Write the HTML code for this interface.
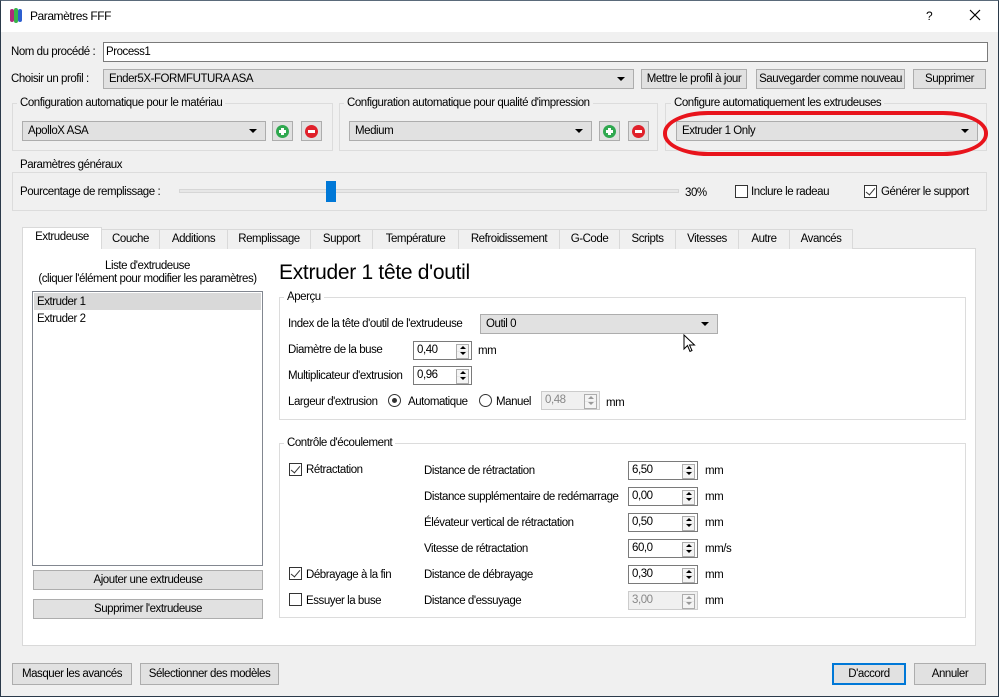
<!DOCTYPE html>
<html><head><meta charset="utf-8"><style>
*{box-sizing:border-box;margin:0;padding:0}
body{width:999px;height:697px;overflow:hidden;background:#f0f0f0;font-family:"Liberation Sans",sans-serif;font-size:11.5px;color:#000;position:relative;letter-spacing:-0.45px}
.a{position:absolute;white-space:nowrap}
.t{position:absolute;white-space:nowrap;line-height:14px}
.btn{position:absolute;background:#e1e1e1;border:1px solid #adadad;text-align:center;line-height:18px;white-space:nowrap;overflow:hidden}
.cb{position:absolute;background:#e1e1e1;border:1px solid #adadad;line-height:18px;padding-left:5px;white-space:nowrap}
.cb:after{content:"";position:absolute;right:8px;top:7px;border-left:4px solid transparent;border-right:4px solid transparent;border-top:4px solid #000}
.grp{position:absolute;border:1px solid #dcdcdc}
.gt{position:absolute;background:#f0f0f0;padding:0 3px;line-height:14px;white-space:nowrap}
.w .gt{background:#fff}
.spin{position:absolute;background:#fff;border:1px solid #7a7a7a;height:19px;width:59px;line-height:17px;padding-left:3px}
.spin:after{content:"";position:absolute;right:2px;top:2px;width:11px;height:13px;border:1px solid #adadad;background:linear-gradient(#e8e8e8,#e8e8e8) 0 6px/100% 1px no-repeat,#f4f4f4}
.spin i{position:absolute;right:5px;width:0;height:0;border-left:3px solid transparent;border-right:3px solid transparent;z-index:2}
.spin i.u{top:4px;border-bottom:3px solid #000}
.spin i.d{top:10px;border-top:3px solid #000}
.spin.dis{border-color:#ccc;color:#888;background:#f0f0f0}
.spin.dis i.u{border-bottom-color:#999}.spin.dis i.d{border-top-color:#999}
.chk{position:absolute;width:13px;height:13px;border:1px solid #333;background:#fff}
.chk.on:after{content:"";position:absolute;left:3px;top:0px;width:4px;height:8px;border-right:1px solid #333;border-bottom:1px solid #333;transform:rotate(40deg)}
.rad{position:absolute;width:13px;height:13px;border:1px solid #333;border-radius:50%;background:#fff}
.rad.on:after{content:"";position:absolute;left:3px;top:3px;width:5px;height:5px;border-radius:50%;background:#333}
.tab{position:absolute;top:229px;height:20px;border:1px solid #d9d9d9;border-bottom:none;background:#f0f0f0;text-align:center;line-height:19px;white-space:nowrap}
.ic{position:absolute;width:21px;height:20px;background:#e1e1e1;border:1px solid #adadad}
.ic b{position:absolute;left:3px;top:3px;width:13px;height:13px;border-radius:50%}
.ic b:before{content:"";position:absolute;left:3px;top:5px;width:7px;height:3px;background:#fff}
.ic b.p:after{content:"";position:absolute;left:5px;top:3px;width:3px;height:7px;background:#fff}
</style></head><body>
<div class="a" style="left:0;top:0;width:999px;height:697px;border:1px solid #2b3a4a;border-top-color:#5a6a7a;z-index:50;pointer-events:none"></div>
<div class="a" style="left:0;top:0;width:999px;height:32px;background:#fff"></div>
<div class="a" style="left:10px;top:9px;width:4px;height:13px;background:#b0287a;border-radius:2px"></div>
<div class="a" style="left:14px;top:8px;width:4px;height:15px;background:#39b34a;border-radius:2px"></div>
<div class="a" style="left:18px;top:9px;width:4px;height:13px;background:#2d5fd0;border-radius:2px"></div>
<div class="t" style="left:30px;top:9px;font-size:12px">Paramètres FFF</div>
<div class="t" style="left:926px;top:9px;font-size:12px">?</div>
<svg class="a" style="left:969px;top:9px" width="12" height="12" viewBox="0 0 12 12"><path d="M1 1L11 11M11 1L1 11" stroke="#000" stroke-width="1.2"/></svg>

<div class="t" style="left:11px;top:45px">Nom du procédé :</div>
<div class="a" style="left:103px;top:42px;width:885px;height:20px;background:#fff;border:1px solid #7a7a7a;padding-left:2px;line-height:18px">Process1</div>
<div class="t" style="left:11px;top:72px">Choisir un profil :</div>
<div class="cb" style="left:103px;top:69px;width:531px;height:20px">Ender5X-FORMFUTURA ASA</div>
<div class="btn" style="left:641px;top:69px;width:106px;height:20px">Mettre le profil à jour</div>
<div class="btn" style="left:756px;top:69px;width:149px;height:20px">Sauvegarder comme nouveau</div>
<div class="btn" style="left:913px;top:69px;width:73px;height:20px">Supprimer</div>

<div class="grp" style="left:12px;top:103px;width:321px;height:48px"></div>
<div class="gt" style="left:17px;top:96px">Configuration automatique pour le matériau</div>
<div class="cb" style="left:22px;top:121px;width:244px;height:20px">ApolloX ASA</div>
<div class="ic" style="left:272px;top:121px"><b class="p" style="background:#2fa84f"></b></div>
<div class="ic" style="left:301px;top:121px"><b style="background:#e0202a"></b></div>

<div class="grp" style="left:339px;top:103px;width:319px;height:48px"></div>
<div class="gt" style="left:344px;top:96px">Configuration automatique pour qualité d'impression</div>
<div class="cb" style="left:349px;top:121px;width:243px;height:20px">Medium</div>
<div class="ic" style="left:599px;top:121px"><b class="p" style="background:#2fa84f"></b></div>
<div class="ic" style="left:628px;top:121px"><b style="background:#e0202a"></b></div>

<div class="grp" style="left:665px;top:103px;width:322px;height:48px"></div>
<div class="gt" style="left:671px;top:96px">Configure automatiquement les extrudeuses</div>
<div class="cb" style="left:676px;top:121px;width:302px;height:20px">Extruder 1 Only</div>
<div class="a" style="left:663px;top:111px;width:325px;height:45px;border:4px solid #e8141c;border-radius:45px/22px;z-index:5"></div>

<div class="grp" style="left:12px;top:172px;width:975px;height:39px"></div>
<div class="gt" style="left:17px;top:158px">Paramètres généraux</div>
<div class="t" style="left:20px;top:185px">Pourcentage de remplissage :</div>
<div class="a" style="left:179px;top:189px;width:500px;height:4px;background:#e7e7e7;border:1px solid #d6d6d6"></div>
<div class="a" style="left:326px;top:181px;width:10px;height:21px;background:#0078d7"></div>
<div class="t" style="left:685px;top:186px">30%</div>
<div class="chk" style="left:735px;top:185px"></div>
<div class="t" style="left:751px;top:185px">Inclure le radeau</div>
<div class="chk on" style="left:864px;top:185px"></div>
<div class="t" style="left:881px;top:185px">Générer le support</div>

<div class="a" style="left:22px;top:248px;width:954px;height:398px;background:#fff;border:1px solid #d9d9d9"></div>
<div class="tab" style="left:22px;top:227px;height:22px;width:80px;background:#fff;z-index:2">Extrudeuse</div>
<div class="tab" style="left:101px;width:59px">Couche</div>
<div class="tab" style="left:159px;width:69px">Additions</div>
<div class="tab" style="left:227px;width:84px">Remplissage</div>
<div class="tab" style="left:310px;width:63px">Support</div>
<div class="tab" style="left:372px;width:87px">Température</div>
<div class="tab" style="left:458px;width:102px">Refroidissement</div>
<div class="tab" style="left:559px;width:61px">G-Code</div>
<div class="tab" style="left:619px;width:57px">Scripts</div>
<div class="tab" style="left:675px;width:64px">Vitesses</div>
<div class="tab" style="left:738px;width:52px">Autre</div>
<div class="tab" style="left:789px;width:64px">Avancés</div>

<div class="t" style="left:32px;top:259px;width:231px;text-align:center">Liste d'extrudeuse</div>
<div class="t" style="left:32px;top:272px;width:231px;text-align:center">(cliquer l'élément pour modifier les paramètres)</div>
<div class="a" style="left:32px;top:291px;width:231px;height:275px;border:1px solid #828790;background:#fff"></div>
<div class="a" style="left:34px;top:293px;width:227px;height:17px;background:#d9d9d9"></div>
<div class="t" style="left:37px;top:295px">Extruder 1</div>
<div class="t" style="left:37px;top:312px">Extruder 2</div>
<div class="btn" style="left:33px;top:570px;width:230px;height:20px">Ajouter une extrudeuse</div>
<div class="btn" style="left:33px;top:599px;width:230px;height:20px">Supprimer l'extrudeuse</div>

<div class="t" style="left:279px;top:261px;font-size:21px;line-height:24px;letter-spacing:-0.3px">Extruder 1 tête d'outil</div>

<div class="w">
<div class="grp" style="left:279px;top:297px;width:687px;height:123px"></div>
<div class="gt" style="left:284px;top:290px">Aperçu</div>
<div class="t" style="left:288px;top:317px">Index de la tête d'outil de l'extrudeuse</div>
<div class="cb" style="left:480px;top:314px;width:238px;height:20px">Outil 0</div>
<div class="t" style="left:288px;top:343px">Diamètre de la buse</div>
<div class="spin" style="left:413px;top:341px">0,40<i class="u"></i><i class="d"></i></div>
<div class="t" style="left:478px;top:344px">mm</div>
<div class="t" style="left:288px;top:369px">Multiplicateur d'extrusion</div>
<div class="spin" style="left:413px;top:366px">0,96<i class="u"></i><i class="d"></i></div>
<div class="t" style="left:288px;top:395px">Largeur d'extrusion</div>
<div class="rad on" style="left:388px;top:394px"></div>
<div class="t" style="left:408px;top:395px">Automatique</div>
<div class="rad" style="left:479px;top:394px"></div>
<div class="t" style="left:496px;top:395px">Manuel</div>
<div class="spin dis" style="left:541px;top:391px">0,48<i class="u"></i><i class="d"></i></div>
<div class="t" style="left:606px;top:396px">mm</div>

<div class="grp" style="left:279px;top:443px;width:687px;height:175px"></div>
<div class="gt" style="left:284px;top:436px">Contrôle d'écoulement</div>
<div class="chk on" style="left:289px;top:463px"></div>
<div class="t" style="left:306px;top:463px">Rétractation</div>
<div class="chk on" style="left:289px;top:567px"></div>
<div class="t" style="left:306px;top:568px">Débrayage à la fin</div>
<div class="chk" style="left:289px;top:593px"></div>
<div class="t" style="left:306px;top:594px">Essuyer la buse</div>

<div class="t" style="left:424px;top:464px">Distance de rétractation</div>
<div class="spin" style="left:628px;top:461px;width:70px">6,50<i class="u"></i><i class="d"></i></div>
<div class="t" style="left:705px;top:464px">mm</div>
<div class="t" style="left:424px;top:490px">Distance supplémentaire de redémarrage</div>
<div class="spin" style="left:628px;top:487px;width:70px">0,00<i class="u"></i><i class="d"></i></div>
<div class="t" style="left:705px;top:490px">mm</div>
<div class="t" style="left:424px;top:516px">Élévateur vertical de rétractation</div>
<div class="spin" style="left:628px;top:513px;width:70px">0,50<i class="u"></i><i class="d"></i></div>
<div class="t" style="left:705px;top:516px">mm</div>
<div class="t" style="left:424px;top:542px">Vitesse de rétractation</div>
<div class="spin" style="left:628px;top:539px;width:70px">60,0<i class="u"></i><i class="d"></i></div>
<div class="t" style="left:705px;top:542px">mm/s</div>
<div class="t" style="left:424px;top:568px">Distance de débrayage</div>
<div class="spin" style="left:628px;top:565px;width:70px">0,30<i class="u"></i><i class="d"></i></div>
<div class="t" style="left:705px;top:568px">mm</div>
<div class="t" style="left:424px;top:594px">Distance d'essuyage</div>
<div class="spin dis" style="left:628px;top:591px;width:70px">3,00<i class="u"></i><i class="d"></i></div>
<div class="t" style="left:705px;top:594px">mm</div>
</div>

<svg class="a" style="left:683px;top:334px" width="14" height="20" viewBox="0 0 14 20"><path d="M1 1 L1 15 L4.5 11.5 L7 17.5 L9 16.5 L6.5 11 L11.5 11 Z" fill="#fff" stroke="#000" stroke-width="1"/></svg>

<div class="btn" style="left:12px;top:663px;width:120px;height:22px;line-height:20px">Masquer les avancés</div>
<div class="btn" style="left:140px;top:663px;width:139px;height:22px;line-height:20px">Sélectionner des modèles</div>
<div class="btn" style="left:832px;top:663px;width:74px;height:22px;line-height:18px;border:2px solid #0078d7">D'accord</div>
<div class="btn" style="left:914px;top:663px;width:72px;height:22px;line-height:20px">Annuler</div>
</body></html>
